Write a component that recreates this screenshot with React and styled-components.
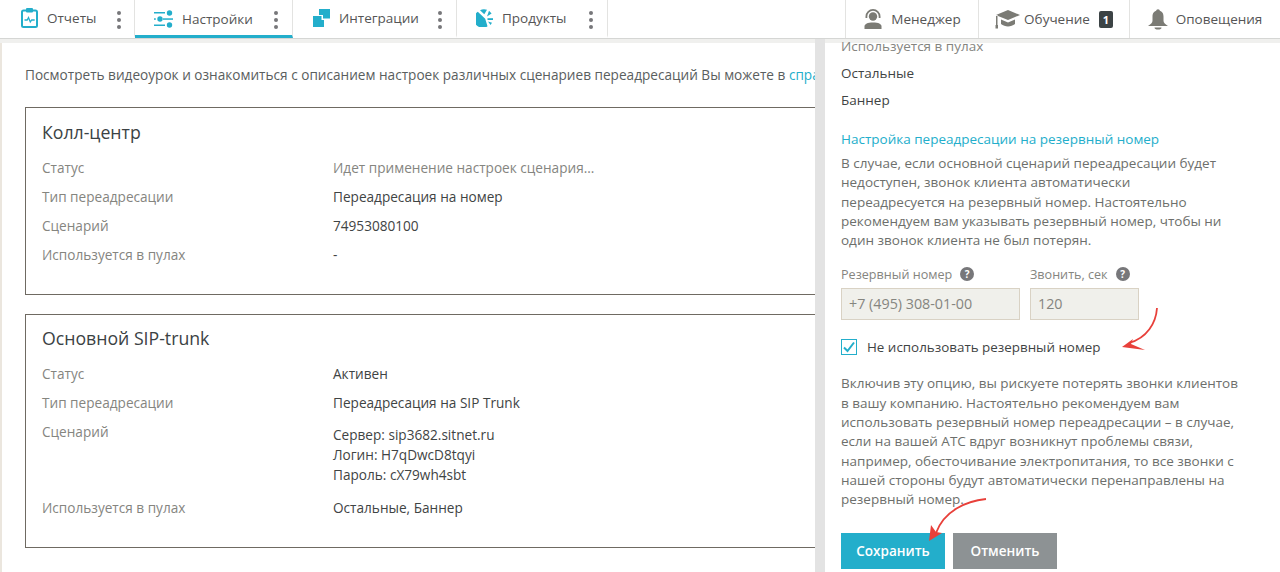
import React from "react";
import styled, { createGlobalStyle } from "styled-components";

const GlobalStyle = createGlobalStyle`
  html, body {
    margin: 0;
    height: 100%;
    overflow: hidden;
    background: #fff;
  }
  body {
    font-family: "Open Sans", "Noto Sans", sans-serif;
    font-size: 13.5px;
    color: #3f4444;
  }
`;

const TEAL = "#23aecb";
const GRAY = "#7b7b75";

function ReportsIcon() {
  return (
    <svg width="17" height="20" viewBox="0 0 17 20">
      <rect x="1" y="2.500" width="15" height="16.500" rx="1.500" fill="none" stroke={TEAL} strokeWidth="2" />
      <rect x="5" y="0" width="7" height="4.500" rx="1" fill={TEAL} />
      <path d="M3.500 12h2.700l1.300-2.500 1.800 4.500 1.400-2h3" fill="none" stroke={TEAL} strokeWidth="1.300" />
    </svg>
  );
}

function SettingsIcon() {
  return (
    <svg width="19" height="18" viewBox="0 0 19 18" fill={TEAL}>
      <rect x="0" y="2" width="11" height="1.500" />
      <circle cx="15.500" cy="3" r="2.700" />
      <rect x="9" y="8.300" width="10" height="1.500" />
      <circle cx="6" cy="9" r="2.700" />
      <rect x="0" y="8.300" width="1.800" height="1.500" />
      <rect x="0" y="14.500" width="11" height="1.500" />
      <circle cx="15.500" cy="15" r="2.700" />
    </svg>
  );
}

function IntegrationsIcon() {
  return (
    <svg width="17" height="18" viewBox="0 0 17 18" fill={TEAL}>
      <path d="M6 0H17V9.500H10V6H6Z" />
      <path d="M0 7H8.500V11H11V18H0Z" />
    </svg>
  );
}

function ProductsIcon() {
  return (
    <svg width="17" height="18" viewBox="0 0 17 18" fill={TEAL}>
      <path d="M1.800 2.800 9.200 9.800 11.500 17.300A8.500 8.500 0 0 1 1.800 2.800Z" />
      <path d="M4 1.300A8.500 8.500 0 0 1 11 .8L8.300 5.300Z" />
      <path d="M13 1.800 15.600 4.500 11 7.500Z" />
      <path d="M11.500 9.200H17V11H11.500Z" />
      <path d="M12 12.500 16 13.800 14.500 16Z" />
    </svg>
  );
}

function ManagerIcon() {
  return (
    <svg width="20" height="20" viewBox="0 0 20 20" fill={GRAY}>
      <circle cx="10" cy="7.500" r="4.200" />
      <path d="M2.500 9V7.500a7.500 7.500 0 0 1 15 0V9h-1.800V7.500a5.700 5.700 0 0 0-11.400 0V9Z" />
      <path d="M1.500 20v-2.500c0-2.500 3-4 8.500-4s8.500 1.500 8.500 4V20Z" />
    </svg>
  );
}

function CapIcon() {
  return (
    <svg width="25" height="20" viewBox="0 0 25 20" fill={GRAY}>
      <path d="M13 1 25 6 13 11 3 7v-.500L1 6Z" />
      <path d="M6 10.500 13 13.500 20 10.500V15c-2 1.500-4.500 2.500-7 2.500S8 16.500 6 15Z" />
      <rect x="1" y="7" width="1.500" height="9" />
      <rect x="0.500" y="16" width="2.500" height="3.500" />
    </svg>
  );
}

function BellIcon() {
  return (
    <svg width="20" height="21" viewBox="0 0 20 21" fill={GRAY}>
      <circle cx="10" cy="2" r="1.800" />
      <path d="M10 1.500c3.500 0 5.500 2.500 5.500 6v4c0 2 1.200 3.300 4.500 5.500H0c3.300-2.200 4.500-3.500 4.500-5.500v-4c0-3.500 2-6 5.500-6Z" />
      <path d="M6.500 18.500h7a3.500 2 0 0 1-7 0Z" />
    </svg>
  );
}

function HelpIcon() {
  return <Help>?</Help>;
}

const leftTabs = [
  { label: "Отчеты", icon: <ReportsIcon />, width: 135, pad: 21, dots: 13 },
  { label: "Настройки", icon: <SettingsIcon />, width: 158, pad: 19, dots: 14, active: true },
  { label: "Интеграции", icon: <IntegrationsIcon />, width: 164, pad: 20, dots: 14 },
  { label: "Продукты", icon: <ProductsIcon />, width: 151, pad: 19, dots: 14 },
];

const cards = [
  {
    title: "Колл-центр",
    height: 188,
    pad: 13,
    rows: [
      { label: "Статус", value: "Идет применение настроек сценария...", muted: true },
      { label: "Тип переадресации", value: "Переадресация на номер" },
      { label: "Сценарий", value: "74953080100" },
      { label: "Используется в пулах", value: "-" },
    ],
  },
  {
    title: "Основной SIP-trunk",
    height: 234,
    pad: 12,
    rows: [
      { label: "Статус", value: "Активен" },
      { label: "Тип переадресации", value: "Переадресация на SIP Trunk" },
      {
        label: "Сценарий",
        lines: ["Сервер: sip3682.sitnet.ru", "Логин: H7qDwcD8tqyi", "Пароль: cX79wh4sbt"],
      },
      { label: "Используется в пулах", value: "Остальные, Баннер" },
    ],
  },
];

export default function App() {
  return (
    <Page>
      <GlobalStyle />
      <Nav>
        <NavGroup>
          {leftTabs.map((tab) => (
            <Tab key={tab.label} $width={tab.width} $pad={tab.pad} $active={tab.active}>
              <TabIcon>{tab.icon}</TabIcon>
              <TabLabel>{tab.label}</TabLabel>
              <Dots $right={tab.dots}>
                <i />
                <i />
                <i />
              </Dots>
            </Tab>
          ))}
        </NavGroup>
        <NavGroup>
          <RightTab $width={133}>
            <ManagerIcon />
            <TabLabel>Менеджер</TabLabel>
          </RightTab>
          <RightTab $width={151} $gap={4}>
            <CapIcon />
            <TabLabel>Обучение</TabLabel>
            <Badge>1</Badge>
          </RightTab>
          <RightTab $width={151}>
            <BellIcon />
            <TabLabel>Оповещения</TabLabel>
          </RightTab>
        </NavGroup>
      </Nav>
      <Strip />
      <Content>
        <Intro>
          Посмотреть видеоурок и ознакомиться с описанием настроек различных сценариев
          переадресаций Вы можете в <IntroLink>справке</IntroLink>
        </Intro>
        {cards.map((card) => (
          <Card key={card.title} $height={card.height} $pad={card.pad}>
            <CardTitle>{card.title}</CardTitle>
            {card.rows.map((row) => (
              <Row key={row.label}>
                <RowLabel>{row.label}</RowLabel>
                {row.lines ? (
                  <MultiValue>
                    {row.lines.map((line) => (
                      <div key={line}>{line}</div>
                    ))}
                  </MultiValue>
                ) : (
                  <RowValue $muted={row.muted}>{row.value}</RowValue>
                )}
              </Row>
            ))}
          </Card>
        ))}
      </Content>
      <Panel>
        <PoolLabel>Используется в пулах</PoolLabel>
        <PoolItem>Остальные</PoolItem>
        <PoolItem>Баннер</PoolItem>
        <PanelHeading>Настройка переадресации на резервный номер</PanelHeading>
        <Paragraph>
          В случае, если основной сценарий переадресации будет недоступен, звонок клиента
          автоматически переадресуется на резервный номер. Настоятельно рекомендуем вам
          указывать резервный номер, чтобы ни один звонок клиента не был потерян.
        </Paragraph>
        <Fields>
          <Field $width={179}>
            <FieldLabel>
              Резервный номер <HelpIcon />
            </FieldLabel>
            <Input>+7 (495) 308-01-00</Input>
          </Field>
          <Field $width={109}>
            <FieldLabel>
              Звонить, сек <HelpIcon />
            </FieldLabel>
            <Input>120</Input>
          </Field>
        </Fields>
        <CheckRow>
          <CheckBox>
            <svg width="14" height="14" viewBox="0 0 14 14">
              <path d="M2 7.500 5.500 11 12 2.500" fill="none" stroke={TEAL} strokeWidth="2" />
            </svg>
          </CheckBox>
          Не использовать резервный номер
        </CheckRow>
        <WarningText>
          Включив эту опцию, вы рискуете потерять звонки клиентов в вашу компанию. Настоятельно
          рекомендуем вам использовать резервный номер переадресации – в случае, если на вашей
          АТС вдруг возникнут проблемы связи, например, обесточивание электропитания, то все
          звонки с нашей стороны будут автоматически перенаправлены на резервный номер.
        </WarningText>
        <Buttons>
          <Button $color={TEAL}>Сохранить</Button>
          <Button $color="#8d9294">Отменить</Button>
        </Buttons>
      </Panel>
      <Arrow width="50" height="50" viewBox="0 0 50 50" $left={1115} $top={303}>
        <path d="M42 5C41 20 32 35 14 40" fill="none" stroke="#e8403a" strokeWidth="1.800" />
        <path d="M7 44 18 36 16 41 30 47Z" fill="#e8403a" />
      </Arrow>
      <Arrow width="64" height="52" viewBox="0 0 64 52" $left={926} $top={495}>
        <path d="M60 4C40 6 18 16 10 38" fill="none" stroke="#e8403a" strokeWidth="1.800" />
        <path d="M3 46 5 30 10 37 16 38Z" fill="#e8403a" />
      </Arrow>
    </Page>
  );
}

const Page = styled.div`
  position: relative;
  width: 1280px;
  height: 572px;
  overflow: hidden;
  background: #fff;
`;

const Nav = styled.div`
  display: flex;
  justify-content: space-between;
  height: 38px;
  background: #fff;
  border-bottom: 1px solid #d5d6d4;
`;

const NavGroup = styled.div`
  display: flex;
`;

const Tab = styled.div`
  display: flex;
  align-items: center;
  box-sizing: border-box;
  width: ${(p) => p.$width}px;
  height: 38px;
  padding-left: ${(p) => p.$pad}px;
  border-right: 1px solid #e3e3e1;
  border-bottom: 3px solid ${(p) => (p.$active ? TEAL : "transparent")};
  padding-top: ${(p) => (p.$active ? "3px" : "0")};
  position: relative;
`;

const TabIcon = styled.span`
  display: flex;
  margin-right: 9px;
`;

const TabLabel = styled.span`
  color: #555;
  font-size: 13.500px;
`;

const Dots = styled.span`
  position: absolute;
  right: ${(p) => p.$right}px;
  top: 11px;
  display: flex;
  flex-direction: column;
  gap: 3px;

  i {
    display: block;
    width: 4px;
    height: 4px;
    border-radius: 50%;
    background: #77777a;
  }
`;

const RightTab = styled.div`
  display: flex;
  align-items: center;
  justify-content: center;
  gap: ${(p) => p.$gap || 8}px;
  box-sizing: border-box;
  width: ${(p) => p.$width}px;
  height: 38px;
  border-left: 1px solid #e3e3e1;
`;

const Badge = styled.span`
  width: 14px;
  height: 17px;
  margin-left: 5px;
  line-height: 17px;
  text-align: center;
  border-radius: 2px;
  background: #3c4345;
  color: #fff;
  font-size: 11px;
  font-weight: 700;
`;

const Strip = styled.div`
  height: 4px;
  background: #f0f0ee;
`;

const Content = styled.div`
  box-sizing: border-box;
  height: 529px;
  padding: 22px 25px 0 23px;
  border-left: 2px solid #ebe6de;
  font-size: 13.620px;
`;

const Intro = styled.div`
  height: 42px;
  line-height: 20px;
  white-space: nowrap;
  color: #5a5e5e;
`;

const IntroLink = styled.span`
  color: ${TEAL};
`;

const Card = styled.div`
  box-sizing: border-box;
  height: ${(p) => p.$height}px;
  margin-bottom: 19px;
  padding: ${(p) => p.$pad}px 16px 0;
  border: 1px solid #6f6a62;
`;

const CardTitle = styled.div`
  height: 33px;
  line-height: 22px;
  font-size: 17.700px;
  color: #3b4244;
`;

const Row = styled.div`
  display: flex;
  min-height: 29px;
  line-height: 20px;
  padding-top: 4px;
  box-sizing: border-box;
`;

const RowLabel = styled.div`
  width: 291px;
  color: #85857f;
`;

const RowValue = styled.div`
  color: ${(p) => (p.$muted ? "#85857f" : "#3f4444")};
`;

const MultiValue = styled.div`
  padding-top: 3px;
  padding-bottom: 9px;
  color: #3f4444;
`;

const Panel = styled.div`
  position: absolute;
  top: 39px;
  left: 815px;
  right: 0;
  bottom: 0;
  padding: 0 16px;
  background: #fff;
  border-left: 10px solid #e3e3e3;
  overflow: hidden;

  &::before {
    content: "";
    position: absolute;
    top: 0;
    left: 0;
    right: 0;
    height: 4px;
    background: #f0f0ee;
  }
`;

const PoolLabel = styled.div`
  line-height: 20px;
  margin-top: -3px;
  color: #85857f;
  position: relative;
`;

const PoolItem = styled.div`
  margin-top: 7px;
  line-height: 20px;
  color: #3f4444;
`;

const PanelHeading = styled.div`
  margin-top: 19px;
  line-height: 20px;
  color: ${TEAL};
`;

const Paragraph = styled.div`
  width: 385px;
  margin-top: 5px;
  line-height: 19.300px;
  color: #6d6f6c;
`;

const Fields = styled.div`
  display: flex;
  gap: 10px;
  margin-top: 14px;
`;

const Field = styled.div`
  width: ${(p) => p.$width}px;
`;

const FieldLabel = styled.div`
  display: flex;
  align-items: center;
  gap: 6px;
  height: 20px;
  white-space: nowrap;
  font-size: 12.600px;
  color: #85857f;
`;

const Help = styled.span`
  display: inline-block;
  width: 14px;
  height: 14px;
  line-height: 14px;
  margin-left: 2px;
  border-radius: 50%;
  text-align: center;
  background: #77777a;
  color: #fff;
  font-size: 10px;
  font-weight: 700;
`;

const Input = styled.div`
  box-sizing: border-box;
  height: 32px;
  margin-top: 4px;
  padding-left: 7px;
  line-height: 29px;
  font-size: 14.300px;
  background: #f0f0eb;
  border: 1px solid #d9d2c4;
  color: #85857f;
`;

const CheckRow = styled.div`
  display: flex;
  align-items: center;
  gap: 10px;
  margin-top: 18px;
  height: 18px;
  font-size: 13.400px;
  color: #3f4444;
`;

const CheckBox = styled.span`
  box-sizing: border-box;
  display: flex;
  align-items: center;
  justify-content: center;
  width: 16px;
  height: 16px;
  border: 1px solid ${TEAL};
`;

const WarningText = styled.div`
  width: 400px;
  margin-top: 18px;
  line-height: 19.300px;
  color: #6d6f6c;
`;

const Buttons = styled.div`
  display: flex;
  gap: 8px;
  margin-top: 23px;
`;

const Button = styled.div`
  width: 104px;
  height: 36px;
  line-height: 36px;
  text-align: center;
  background: ${(p) => p.$color};
  color: #fff;
  font-weight: 600;
`;

const Arrow = styled.svg`
  position: absolute;
  left: ${(p) => p.$left}px;
  top: ${(p) => p.$top}px;
`;
